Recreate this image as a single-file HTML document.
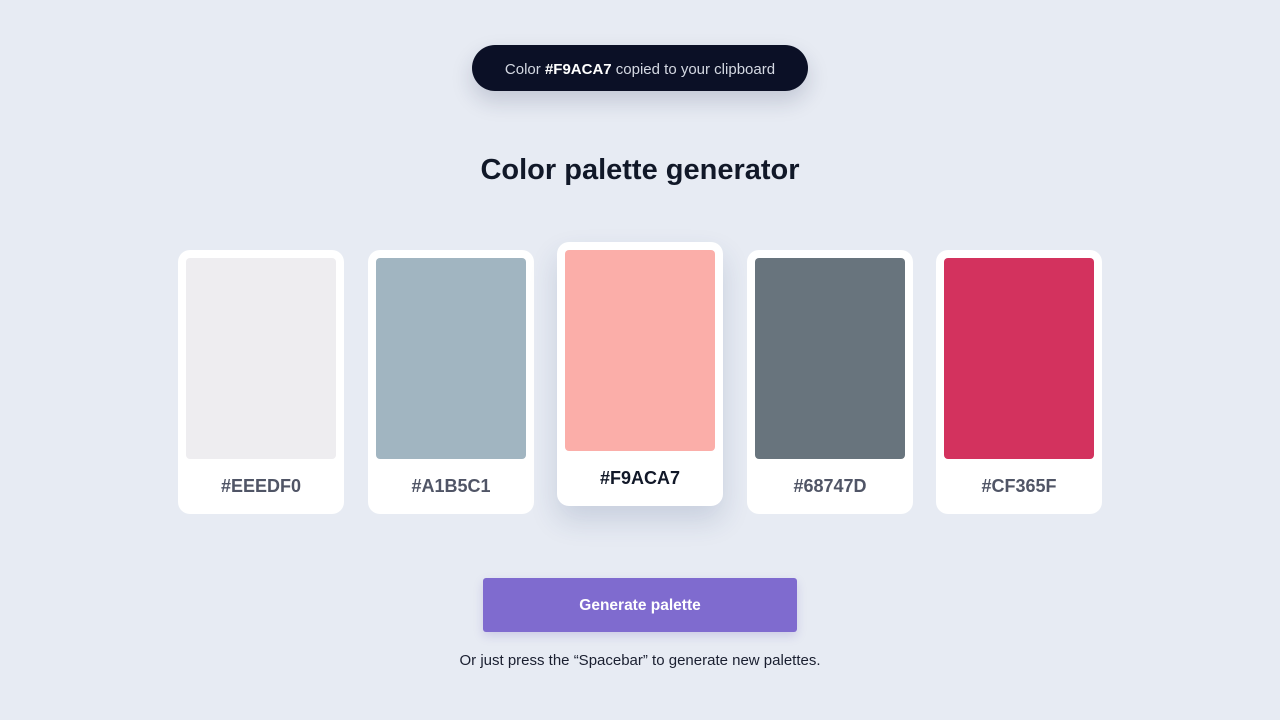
<!DOCTYPE html>
<html><head><style>
*{margin:0;padding:0;box-sizing:border-box}
body{width:1280px;height:720px;background:#e7ebf3;font-family:"Liberation Sans",sans-serif;position:relative;overflow:hidden}
.toast{position:absolute;left:472px;top:45px;width:336px;height:46px;border-radius:23px;background:#0b1026;color:#d4d8e2;font-size:15px;text-align:center;line-height:49px;box-shadow:0 10px 22px rgba(30,40,80,.18)}
.toast b{color:#fff}
h1{position:absolute;top:154px;left:0;width:1280px;text-align:center;font-size:29px;color:#111828;font-weight:bold}
.card{position:absolute;top:250px;width:166px;height:264px;background:#fff;border-radius:12px}
.sw{position:absolute;left:8px;top:8px;width:150px;height:201px;border-radius:4px}
.lbl{position:absolute;left:0;width:166px;top:226px;text-align:center;font-size:18px;font-weight:bold;color:#505566}
.act{top:242px;box-shadow:0 14px 28px rgba(40,60,110,.16)}
.act .lbl{color:#111828}
.btn{position:absolute;left:483px;top:578px;width:314px;height:54px;background:#7f6bcf;border-radius:3px;color:#fff;font-weight:bold;font-size:15.5px;text-align:center;line-height:56px;box-shadow:0 4px 10px rgba(100,80,180,.2)}
.hint{position:absolute;top:652px;left:0;width:1280px;text-align:center;font-size:15px;color:#1a1f30}
</style></head><body>
<div class="toast">Color <b>#F9ACA7</b> copied to your clipboard</div>
<h1>Color palette generator</h1>
<div class="card" style="left:178px"><div class="sw" style="background:#eeedf0"></div><div class="lbl">#EEEDF0</div></div>
<div class="card" style="left:368px"><div class="sw" style="background:#a1b5c1"></div><div class="lbl">#A1B5C1</div></div>
<div class="card act" style="left:557px"><div class="sw" style="background:#fbaea9"></div><div class="lbl">#F9ACA7</div></div>
<div class="card" style="left:747px"><div class="sw" style="background:#68747d"></div><div class="lbl">#68747D</div></div>
<div class="card" style="left:936px"><div class="sw" style="background:#d3325e"></div><div class="lbl">#CF365F</div></div>
<div class="btn">Generate palette</div>
<div class="hint">Or just press the “Spacebar” to generate new palettes.</div>
</body></html>
